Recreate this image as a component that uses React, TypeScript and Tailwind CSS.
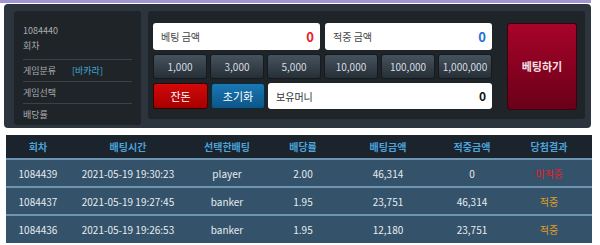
import React from 'react'

interface Row {
  round: string
  time: string
  pick: string
  odds: string
  bet: string
  win: string
  result: string
  hit: boolean
}

const rows: Row[] = [
  { round: '1084439', time: '2021-05-19 19:30:23', pick: 'player', odds: '2.00', bet: '46,314', win: '0', result: '미적중', hit: false },
  { round: '1084437', time: '2021-05-19 19:27:45', pick: 'banker', odds: '1.95', bet: '23,751', win: '46,314', result: '적중', hit: true },
  { round: '1084436', time: '2021-05-19 19:26:53', pick: 'banker', odds: '1.95', bet: '12,180', win: '23,751', result: '적중', hit: true },
]

const chips = ['1,000', '3,000', '5,000', '10,000', '100,000', '1,000,000']

const font = { fontFamily: '"Noto Sans CJK KR", "Noto Sans", sans-serif' }

export default function App() {
  return (
    <div className="h-[245px] w-[600px] overflow-hidden bg-white" style={font}>
      <div className="h-[3px] w-[591px] bg-[#a195d4]" />
      <div className="ml-[4px] mt-[1px] flex h-[124px] w-[587px] gap-[7px] rounded-[4px] bg-[#2c353d] pl-[10px] pr-[5px] pt-[7px]">
        {/* left info panel */}
        <div className="flex h-[114px] w-[127px] flex-col overflow-hidden rounded-[3px] bg-[#1f2428] px-[9px] pt-[15px] text-[9px] leading-none text-[#a9adb1]">
          <div className="border-b border-[#3a4147] pb-[9px]">
            <div>1084440</div>
            <div className="mt-[6px]">회차</div>
          </div>
          <div className="flex items-center border-b border-[#3a4147] py-[6px]">
            <span className="w-[49px]">게임분류</span>
            <span className="text-[#3fa9d6]">[바카라]</span>
          </div>
          <div className="border-b border-[#3a4147] py-[6px]">게임선택</div>
          <div className="py-[6px]">배당률</div>
        </div>

        {/* betting panel */}
        <div className="flex h-[108px] w-[437px] gap-[15px] rounded-[3px] bg-[#1f2428] px-[5px] pt-[12px]">
          <div className="flex w-[339px] flex-col gap-[4px]">
            <div className="flex gap-[5px]">
              <div className="flex h-[27px] w-[167px] items-center justify-between rounded-[3px] bg-white pl-[8px] pr-[6px]">
                <span className="text-[10px] text-[#444]">베팅 금액</span>
                <span className="text-[13px] font-bold text-[#e8202a]">0</span>
              </div>
              <div className="flex h-[27px] w-[167px] items-center justify-between rounded-[3px] bg-white pl-[8px] pr-[6px]">
                <span className="text-[10px] text-[#444]">적중 금액</span>
                <span className="text-[13px] font-bold text-[#1e6fe0]">0</span>
              </div>
            </div>
            <div className="grid grid-cols-6 gap-[3px]">
              {chips.map((c) => (
                <button
                  key={c}
                  className="h-[25px] rounded-[3px] border border-[#151a1e] bg-gradient-to-b from-[#46535e] to-[#262f37] text-[10px] text-[#d8dde1]"
                  style={font}
                >
                  {c}
                </button>
              ))}
            </div>
            <div className="flex gap-[3px]">
              <button
                className="h-[26px] w-[55px] rounded-[3px] border border-[#3a0000] bg-gradient-to-b from-[#d20a0a] to-[#a60000] text-[11px] text-white"
                style={font}
              >
                잔돈
              </button>
              <button
                className="h-[26px] w-[54px] rounded-[3px] border border-[#0c2a40] bg-gradient-to-b from-[#1a78b4] to-[#0c5588] text-[11px] text-white"
                style={font}
              >
                초기화
              </button>
              <div className="flex h-[26px] flex-1 items-center justify-between rounded-[3px] bg-white pl-[8px] pr-[6px]">
                <span className="text-[10px] text-[#333]">보유머니</span>
                <span className="text-[12px] font-bold text-[#111]">0</span>
              </div>
            </div>
          </div>
          <button
            className="h-[87px] w-[70px] rounded-[3px] border border-[#3d0010] bg-gradient-to-b from-[#a8042a] to-[#6a0018] text-[11px] font-bold text-[#f3e0e4]"
            style={font}
          >
            베팅하기
          </button>
        </div>
      </div>

      {/* history table */}
      <table className="ml-[6px] mt-[7px] w-[586px] table-fixed border-collapse text-[10px]">
        <colgroup>
          <col className="w-[64px]" />
          <col className="w-[116px]" />
          <col className="w-[82px]" />
          <col className="w-[70px]" />
          <col className="w-[100px]" />
          <col className="w-[68px]" />
          <col className="w-[86px]" />
        </colgroup>
        <thead>
          <tr className="h-[24px] bg-[#1b242d] text-[#4ba3dc]">
            {['회차', '배팅시간', '선택한배팅', '배당률', '배팅금액', '적중금액', '당첨결과'].map((h) => (
              <th key={h} className="font-bold">
                {h}
              </th>
            ))}
          </tr>
        </thead>
        <tbody>
          {rows.map((r) => (
            <tr key={r.round} className="h-[28px] border-t-2 border-[#6d94b0] bg-[#34526a] text-center text-[#e6ecf0]">
              <td>{r.round}</td>
              <td>{r.time}</td>
              <td>{r.pick}</td>
              <td>{r.odds}</td>
              <td>{r.bet}</td>
              <td>{r.win}</td>
              <td className={r.hit ? 'text-[#e0a020]' : 'text-[#e0202a]'}>{r.result}</td>
            </tr>
          ))}
        </tbody>
      </table>
    </div>
  )
}
